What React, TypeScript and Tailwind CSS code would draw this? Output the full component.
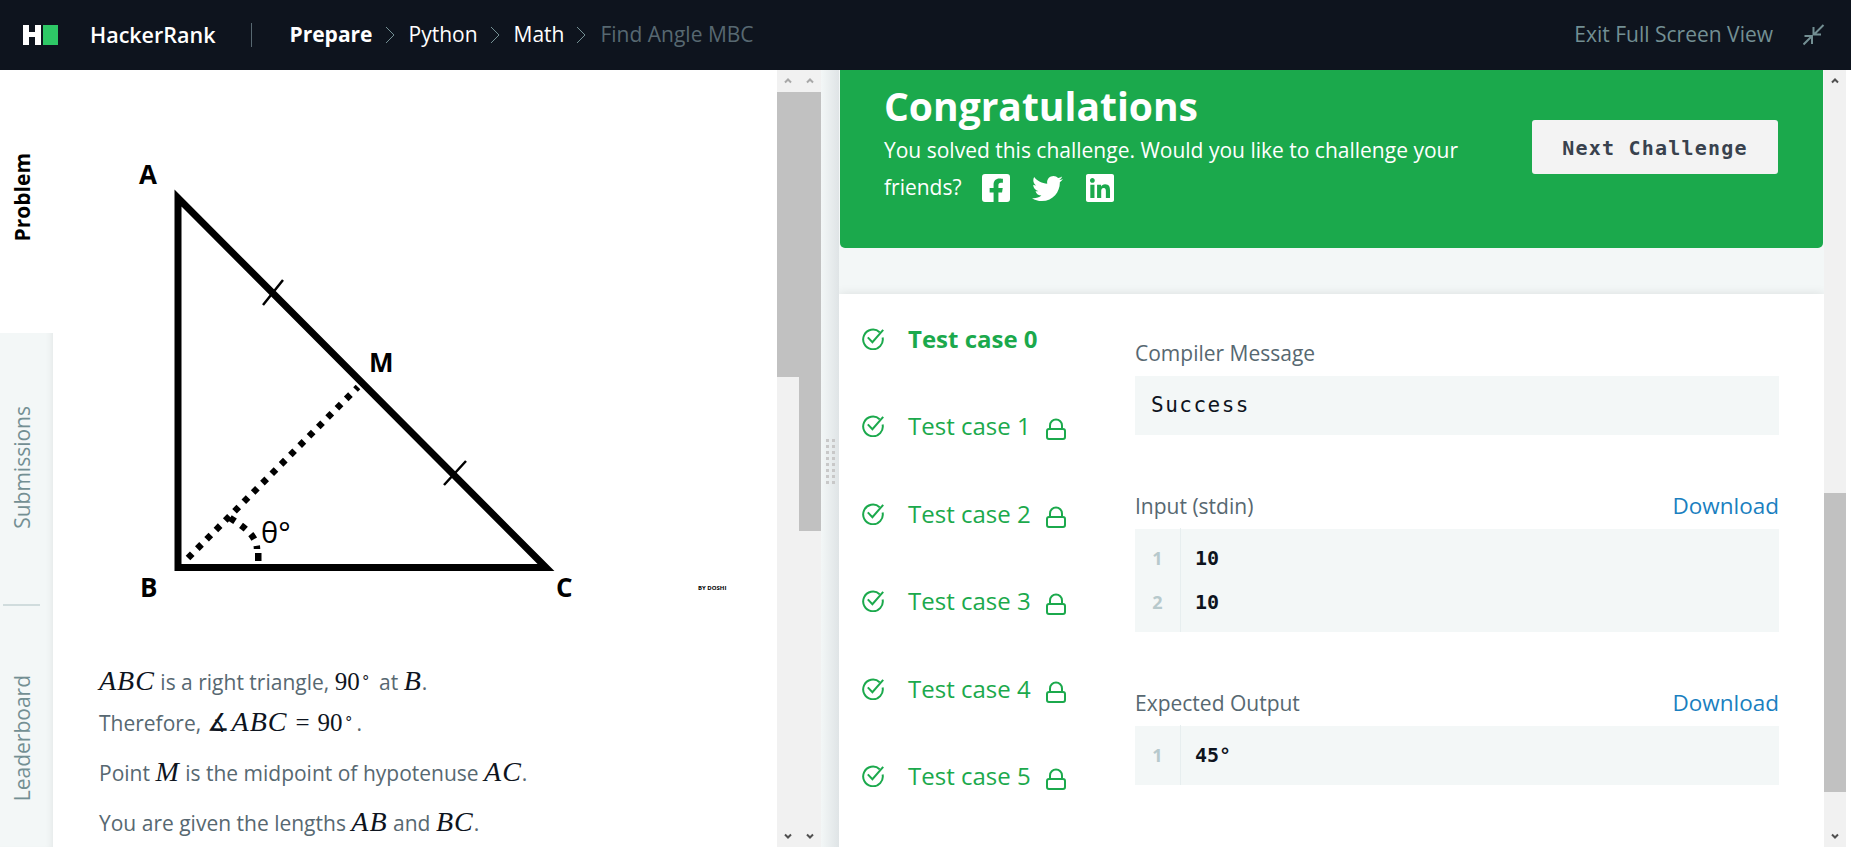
import type { ReactNode } from "react";
import { FaFacebookSquare, FaLinkedin, FaTwitter } from "react-icons/fa";

const TEST_CASES = [0, 1, 2, 3, 4, 5];

function Arrow({ down, dark }: { down?: boolean; dark?: boolean }) {
  return (
    <svg width="8" height="6" viewBox="0 0 8 6" className={dark ? "text-[#505050]" : "text-[#a8a8a8]"}>
      <path
        d={down ? "M1 1.5 L4 4.5 L7 1.5" : "M1 4.5 L4 1.5 L7 4.5"}
        fill="none"
        stroke="currentColor"
        strokeWidth="2"
      />
    </svg>
  );
}

function ScrollBar({
  thumbTop,
  thumbHeight,
  upDark,
}: {
  thumbTop: number;
  thumbHeight: number;
  upDark?: boolean;
}) {
  return (
    <div className="flex h-full w-[22px] shrink-0 flex-col bg-[#f1f1f1]">
      <div className="flex h-[22px] shrink-0 items-center justify-center">
        <Arrow dark={upDark} />
      </div>
      <div className="flex-1">
        <div style={{ height: thumbTop }} />
        <div className="bg-[#c1c1c1]" style={{ height: thumbHeight }} />
      </div>
      <div className="flex h-[22px] shrink-0 items-center justify-center">
        <Arrow down dark />
      </div>
    </div>
  );
}

function Breadcrumb({ children, last }: { children: ReactNode; last?: boolean }) {
  return (
    <>
      {children}
      {!last && (
        <svg width="10" height="18" viewBox="0 0 10 18" className="ml-[12px] mr-[14px] text-[#738f93]">
          <path d="M1 1 L9 9 L1 17" fill="none" stroke="currentColor" strokeWidth="1" />
        </svg>
      )}
    </>
  );
}

function Header() {
  return (
    <header className="flex h-[70px] shrink-0 items-center bg-[#0e141e] pl-[23px] pr-[26px] text-[21px]">
      <svg width="35" height="20" viewBox="0 0 35 20" className="shrink-0">
        <path d="M0 0h6v7h6V0h6v20h-6v-8H6v8H0z" fill="#fff" />
        <rect x="20" width="15" height="20" fill="#2ec866" />
      </svg>
      <span className="ml-[32px] text-[21.5px] font-semibold text-white">HackerRank</span>
      <div className="ml-[36px] mr-[37px] h-[24px] w-px bg-[#576871]" />
      <Breadcrumb>
        <span className="font-bold text-white">Prepare</span>
      </Breadcrumb>
      <Breadcrumb>
        <span className="text-white">Python</span>
      </Breadcrumb>
      <Breadcrumb>
        <span className="text-white">Math</span>
      </Breadcrumb>
      <Breadcrumb last>
        <span className="text-[#576871]">Find Angle MBC</span>
      </Breadcrumb>
      <span className="ml-auto text-[#738f93]">Exit Full Screen View</span>
      <svg width="22" height="22" viewBox="0 0 22 22" className="ml-[30px] text-[#738f93]">
        <path
          d="M20.5 1 L11 10.5 M10.5 3 V10.5 H18 M0.5 20.5 L9 12 M1.5 12 H9 V20"
          fill="none"
          stroke="currentColor"
          strokeWidth="2"
        />
      </svg>
    </header>
  );
}

function SideTabs() {
  return (
    <aside className="flex w-[53px] shrink-0 flex-col bg-[#f3f7f7] text-[21px] shadow-[inset_-6px_0_6px_-4px_rgba(0,0,0,0.06)]">
      <div className="flex h-[263px] shrink-0 flex-col items-center bg-white pr-[9px] pt-[83px]">
        <span className="rotate-180 font-bold leading-[26px] text-black [writing-mode:vertical-rl]">Problem</span>
      </div>
      <div className="flex h-[271px] shrink-0 flex-col items-center pr-[9px] pt-[73px] text-[#738f93]">
        <span className="rotate-180 leading-[26px] [writing-mode:vertical-rl]">Submissions</span>
      </div>
      <div className="relative flex flex-1 flex-col items-center pr-[9px] pt-[71px] text-[#738f93]">
        <div className="absolute left-[3px] top-0 h-[2px] w-[37px] bg-[#d0dcdd]" />
        <span className="rotate-180 leading-[26px] [writing-mode:vertical-rl]">Leaderboard</span>
      </div>
    </aside>
  );
}

function Triangle() {
  const text = "'Open Sans', sans-serif";
  return (
    <svg width="660" height="580" viewBox="99 70 660 580" className="ml-[46px] block">
      <path d="M178 198 V567.5 H546 Z" fill="none" stroke="#000" strokeWidth="7" />
      <path d="M263 305 L283 280 M444 485 L466 461" stroke="#000" strokeWidth="2.5" />
      <path d="M188 558 L358 387" stroke="#000" strokeWidth="6.5" strokeDasharray="6 7.2" />
      <path d="M230 518 C243 526 257 536 257 549" fill="none" stroke="#000" strokeWidth="6.5" strokeDasharray="6 7.2" />
      <rect x="255" y="553" width="6.5" height="8" fill="#000" />
      <g fontFamily={text} fontWeight="700" fontSize="26" fill="#000">
        <text x="139" y="184">A</text>
        <text x="140" y="597">B</text>
        <text x="556" y="597">C</text>
        <text x="369" y="372">M</text>
      </g>
      <text x="261" y="543" fontFamily={text} fontSize="29" fill="#000">θ°</text>
      <text x="698" y="590" fontFamily={text} fontSize="6" fontWeight="700" fill="#000">BY DOSHI</text>
    </svg>
  );
}

function M({ children, upright }: { children: ReactNode; upright?: boolean }) {
  return (
    <span
      className={`font-['Liberation_Serif',serif] leading-none text-[#0e141e] ${
        upright ? "text-[25px]" : "text-[28px] italic tracking-[1px]"
      }`}
    >
      {children}
    </span>
  );
}

function Degree() {
  return (
    <sup className="-top-[8px] ml-[1px] mr-[4px] text-[15px] leading-none text-[#0e141e]">∘</sup>
  );
}

function ProblemPane() {
  return (
    <div className="h-full w-[724px] shrink-0 overflow-hidden bg-white">
      <Triangle />
      <div className="mt-[12px] pl-[46px] text-[21px] text-[#576871]">
        <p className="leading-[41px]">
          <M>ABC</M> is a right triangle, <M upright>90</M>
          <Degree /> at <M>B</M>.
          <br />
          Therefore,{" "}
          <span className="mr-[3px]">
            <M upright>∡</M>
          </span>
          <M>ABC</M>
          <span className="mx-[8px]">
            <M upright>=</M>
          </span>
          <M upright>90</M>
          <Degree />.
        </p>
        <p className="mt-[9px] leading-[41px]">
          Point <M>M</M> is the midpoint of hypotenuse <M>AC</M>.
        </p>
        <p className="mt-[9px] leading-[41px]">
          You are given the lengths <M>AB</M> and <M>BC</M>.
        </p>
      </div>
    </div>
  );
}

function Splitter() {
  return (
    <div className="flex h-full w-[18px] shrink-0 flex-col items-center bg-gradient-to-r from-[#f3f7f7] to-[#dfe4e6] pt-[369px]">
      <div className="grid grid-cols-2 gap-x-[3px] gap-y-[3px]">
        {Array.from({ length: 16 }).map((_, i) => (
          <div key={i} className="h-[3px] w-[3px] bg-[#c8c8c8]" />
        ))}
      </div>
    </div>
  );
}

function CheckIcon() {
  return (
    <svg width="22" height="22" viewBox="0 0 22 22" className="shrink-0">
      <path
        d="M17.6 4.2 A9.8 9.8 0 1 0 20.6 9.5 M5.8 9.4 L10.4 14.2 L21.2 1.8"
        fill="none"
        stroke="#1ba94c"
        strokeWidth="2"
      />
    </svg>
  );
}

function LockIcon() {
  return (
    <svg width="20" height="22" viewBox="0 0 20 22" className="ml-[15px] mt-[6px] shrink-0">
      <rect x="1" y="11" width="18" height="10" rx="2" fill="none" stroke="#1ba94c" strokeWidth="2" />
      <path d="M4 11 V7.5 A6 6 0 0 1 16 7.5 V11" fill="none" stroke="#1ba94c" strokeWidth="2" />
    </svg>
  );
}

function TestCaseList() {
  return (
    <ul className="w-[296px] shrink-0 pl-[23px] pt-[1px] text-[24px] text-[#1ba94c]">
      {TEST_CASES.map((n) => (
        <li key={n} className="flex h-[87.5px] items-center">
          <CheckIcon />
          <span className={`ml-[24px] ${n === 0 ? "font-bold" : ""}`}>Test case {n}</span>
          {n > 0 && <LockIcon />}
        </li>
      ))}
    </ul>
  );
}

function SectionLabel({ label, download }: { label: string; download?: boolean }) {
  return (
    <div className="mb-[10px] flex h-[24px] items-center justify-between text-[21px] text-[#576871]">
      <span>{label}</span>
      {download && <span className="-mt-[2px] text-[22.5px] text-[#1a7fbf]">Download</span>}
    </div>
  );
}

function CodeBlock({ lines }: { lines: string[] }) {
  return (
    <div className="flex bg-[#f3f7f7] pb-[8px] pt-[7px] font-['DejaVu_Sans_Mono',monospace] text-[20px] font-bold">
      <div className="w-[45px] shrink-0 text-center font-['Open_Sans',sans-serif] text-[18px] text-[#b7c9cc]">
        {lines.map((_, i) => (
          <div key={i} className="flex h-[44px] items-center justify-center">
            {i + 1}
          </div>
        ))}
      </div>
      <div className="-my-[8px] border-l border-[#e7eeef] py-[8px] pl-[14px] text-[#0e141e]">
        {lines.map((line, i) => (
          <div key={i} className="flex h-[44px] items-center">
            {line}
          </div>
        ))}
      </div>
    </div>
  );
}

function ResultPane() {
  return (
    <main className="h-full min-w-0 flex-1 overflow-hidden bg-[#f3f7f7]">
      <section className="ml-px flex h-[178px] w-[983px] rounded-b-[5px] bg-[#1ba94c] pl-[44px] pr-[45px] text-white">
        <div className="w-[600px] shrink-0">
          <h1 className="mt-[11px] text-[39px] font-bold leading-[50px]">Congratulations</h1>
          <p className="text-[21px] leading-[38px]">
            You solved this challenge. Would you like to challenge your
          </p>
          <div className="flex h-[38px] items-center text-[21px]">
            friends?
            <FaFacebookSquare className="ml-[18px]" size={32} />
            <FaTwitter className="ml-[20px]" size={31} />
            <FaLinkedin className="ml-[21px]" size={32} />
          </div>
        </div>
        <button
          type="button"
          className="ml-auto mt-[50px] h-[54px] w-[246px] rounded-[3px] bg-[#f3f3f3] pt-[2px] font-['DejaVu_Sans_Mono',monospace] text-[20px] font-bold tracking-[1.2px] text-[#39424e]"
        >
          Next Challenge
        </button>
      </section>
      <section className="mt-[46px] flex h-[600px] w-[985px] bg-white shadow-[0_0_10px_rgba(0,0,0,0.1)]">
        <TestCaseList />
        <div className="w-[644px] pt-[48px]">
          <SectionLabel label="Compiler Message" />
          <div className="flex h-[59px] items-center bg-[#f3f7f7] pl-[16px] font-['DejaVu_Sans_Mono',monospace] text-[21px] tracking-[1.5px] text-[#0e141e]">
            Success
          </div>
          <div className="mt-[60px]">
            <SectionLabel label="Input (stdin)" download />
            <CodeBlock lines={["10", "10"]} />
          </div>
          <div className="mt-[60px]">
            <SectionLabel label="Expected Output" download />
            <CodeBlock lines={["45°"]} />
          </div>
        </div>
      </section>
    </main>
  );
}

export default function App() {
  return (
    <div className="flex h-screen flex-col overflow-hidden bg-white font-['Open_Sans',sans-serif]">
      <Header />
      <div className="flex min-h-0 flex-1">
        <SideTabs />
        <ProblemPane />
        <ScrollBar thumbTop={0} thumbHeight={285} />
        <ScrollBar thumbTop={0} thumbHeight={439} />
        <Splitter />
        <ResultPane />
        <ScrollBar thumbTop={401} thumbHeight={299} upDark />
        <div className="w-[5px] shrink-0 bg-white" />
      </div>
    </div>
  );
}
